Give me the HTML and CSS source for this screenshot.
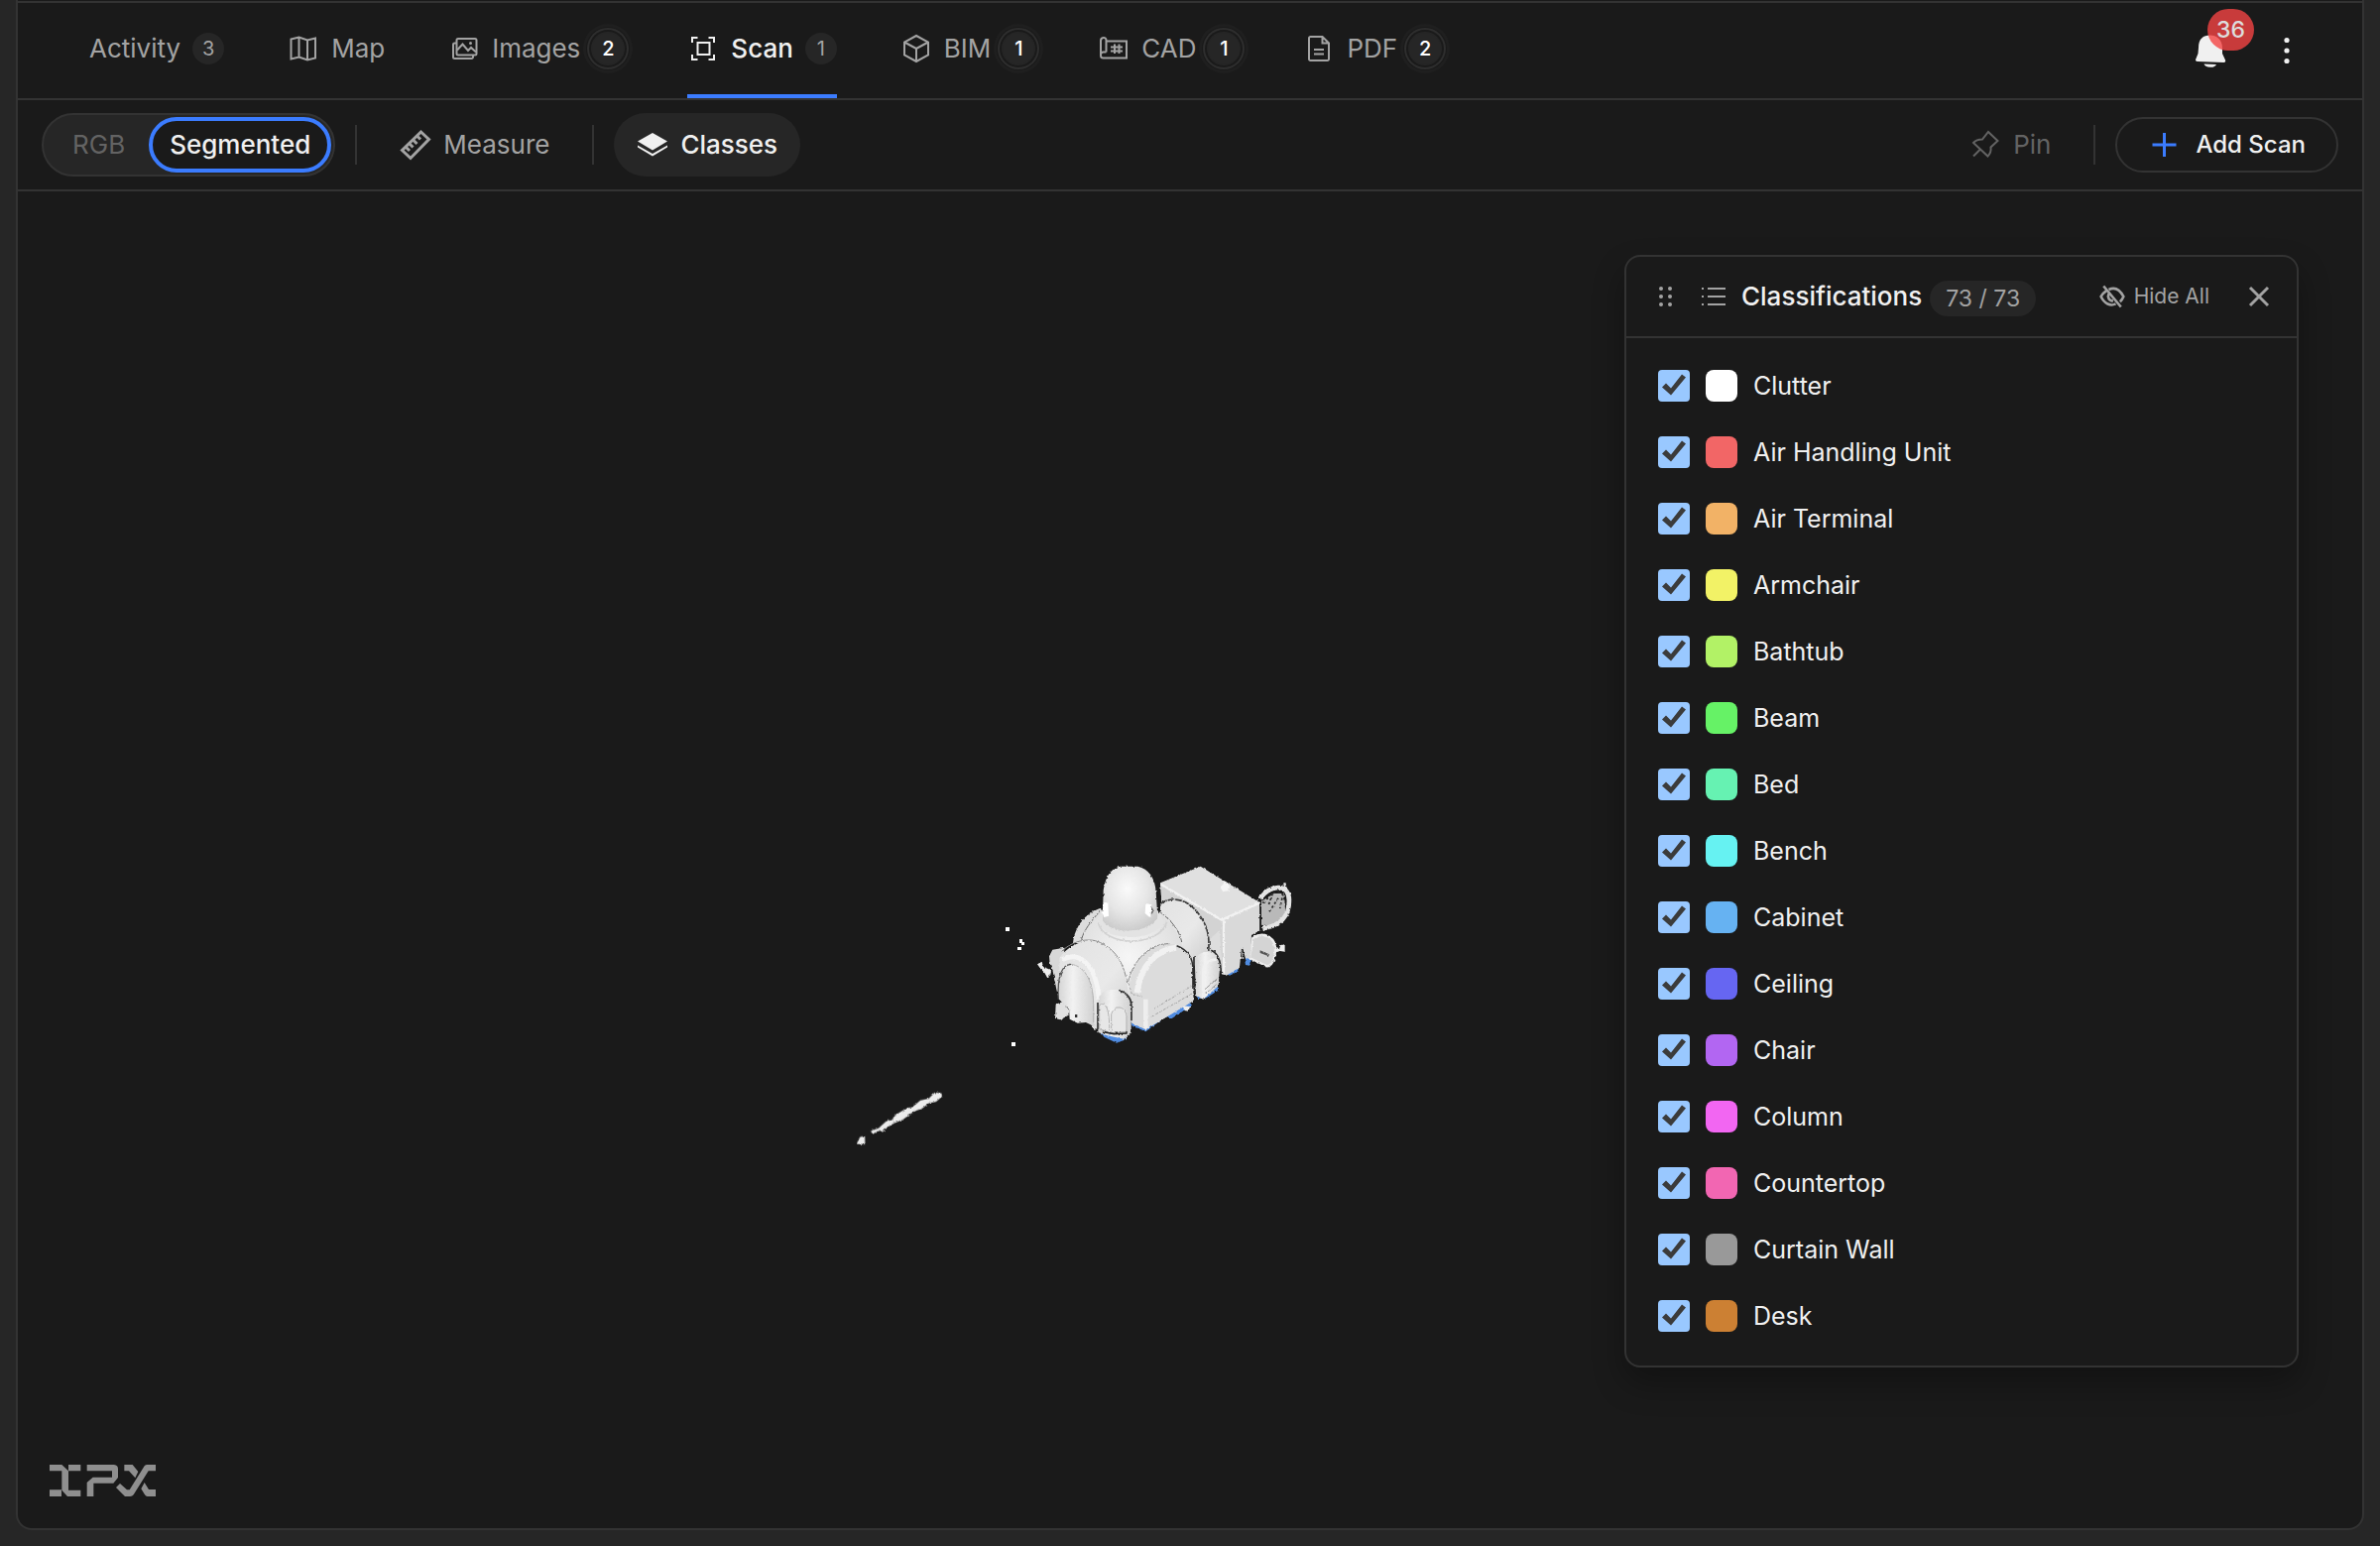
FILE: index.html
```html
<!DOCTYPE html>
<html lang="en">
<head>
<meta charset="utf-8">
<title>Scan viewer</title>
<link rel="stylesheet" href="styles.css">
</head>
<body>
<div class="frame">
  <header class="header">
    <nav class="tabs">
      <a class="tab" href="#activity">Activity <span class="count">3</span></a>
      <a class="tab" href="#map"><svg class="icon" viewBox="0 0 32 32"><path d="M3.5 6.5 11.5 4.5 20 7.500 28 5.500V25.500L20 27.500 11.500 24.500 3.500 26.500ZM11.500 4.500V24.500M20 7.500V27.500"/></svg>Map</a>
      <a class="tab" href="#images"><svg class="icon" viewBox="0 0 32 32"><rect x="8.500" y="6" width="20" height="16.500" rx="1.500"/><path d="M8 10.500H6.500a1.500 1.500 0 0 0-1.500 1.500V24.500a1.500 1.500 0 0 0 1.500 1.500H23.500a1.500 1.500 0 0 0 1.500-1.500V23M9 17.500 14.500 11.500 20 18 23 15 28 19.500"/><circle class="solid" cx="22.500" cy="10.500" r="1.500"/></svg>Images <span class="count ringed">2</span></a>
      <a class="tab active" href="#scan" aria-current="page"><svg class="icon" viewBox="0 0 32 32"><path d="M5 10V5H10.500M21.500 5H27V10M27 22V27H21.500M10.500 27H5V22"/><rect x="10.500" y="10" width="12" height="12"/></svg>Scan <span class="count">1</span></a>
      <a class="tab" href="#bim"><svg class="icon" viewBox="0 0 32 32"><path d="M16 3 28 9.500V22.500L16 29 4 22.500V9.500ZM4 9.500 16 16 28 9.500M16 16V29"/></svg>BIM <span class="count ringed">1</span></a>
      <a class="tab" href="#cad"><svg class="icon" viewBox="0 0 32 32"><path d="M8.500 19.500V7.500a2.500 2.500 0 0 0-3-2.500A3 3 0 0 0 3 8V23a2.500 2.500 0 0 0 2.500 2.500H29V8.500H8.500M8.500 19.500H5.500A2.500 2.500 0 0 0 3 22"/><path d="M17 11.500V21M21.500 11.500V21M13 14.500H25M13 18.500H25"/></svg>CAD <span class="count ringed">1</span></a>
      <a class="tab" href="#pdf"><svg class="icon" viewBox="0 0 32 32"><path d="M19.500 4H7.500A1.500 1.500 0 0 0 6 5.500V26.500A1.500 1.500 0 0 0 7.500 28H24.500A1.500 1.500 0 0 0 26 26.500V10.500ZM19.500 4V10.500H26M11 17H21M11 21.500H21"/></svg>PDF <span class="count ringed">2</span></a>
    </nav>
    <div class="actions">
      <button class="icon-button bell" type="button" aria-label="Notifications">
        <svg class="icon" viewBox="0 0 32 36"><path class="solid" d="M4 15C4 6 9 2.500 15.500 2.500S28 7 28 15V21L31 27.500C31.500 29 31 30 29.500 30L3 29C1 29 .5 27.500 1.500 26L3.500 21ZM9.500 31.500 22 32C21 34 19 35 16 34.800 12 34.500 10 33.500 9.500 31.500Z"/></svg>
        <span class="alert">36</span>
      </button>
      <button class="icon-button" type="button" aria-label="More">
        <svg class="icon" viewBox="0 0 32 32"><g class="solid"><circle cx="16" cy="5.500" r="2.600"/><circle cx="16" cy="16" r="2.600"/><circle cx="16" cy="26.500" r="2.600"/></g></svg>
      </button>
    </div>
  </header>

  <div class="toolbar">
    <div class="toggle">
      <button class="segment" type="button">RGB</button>
      <button class="segment selected" type="button">Segmented</button>
    </div>
    <span class="divider"></span>
    <button class="tool" type="button"><svg class="icon thick" viewBox="0 0 32 32"><path d="M21.500 3 29.500 10.500 11 29.500 2.500 21.500ZM17.500 7 21 10.500M13.500 11 17.500 15M10 15 13.500 18.500M6.500 18.500 10 22"/></svg>Measure</button>
    <span class="divider"></span>
    <button class="tool on" type="button"><svg class="icon" viewBox="0 0 32 32"><path class="solid" d="M16 4 31 12.500 16 21.500 1 12.500ZM1 16.500 16 25 31 16.500V18.500L16 27.500 1 18.500Z"/></svg>Classes</button>
    <span class="spacer"></span>
    <button class="tool" type="button" disabled><svg class="icon" viewBox="0 0 32 32"><path d="M19 3 28.500 12 21.500 18.500C22 22 21 25 18.500 27.500L4 14C6.500 11 9.500 10.500 13 10.500ZM11 20.500 4 27.500"/></svg>Pin</button>
    <span class="divider"></span>
    <button class="add" type="button"><svg class="icon plus" viewBox="0 0 32 32"><path d="M16.500 4V28M4.500 16H28.500"/></svg>Add Scan</button>
  </div>

  <main class="viewport">
    <svg class="cloud" viewBox="840 527 720 680" role="img" aria-label="Segmented point cloud">
      <defs>
        <radialGradient id="dome" cx=".45" cy=".35" r=".75"><stop offset="0" stop-color="#fafafa"/><stop offset=".5" stop-color="#e6e6e6"/><stop offset="1" stop-color="#c4c4c4"/></radialGradient>
        <linearGradient id="barrel" x1="0" y1="0" x2="1" y2="1"><stop offset="0" stop-color="#e2e2e2"/><stop offset=".55" stop-color="#e9e9e9"/><stop offset="1" stop-color="#cccccc"/></linearGradient>
        <linearGradient id="front" x1="0" x2="1"><stop offset="0" stop-color="#d5d5d5"/><stop offset=".4" stop-color="#f2f2f2"/><stop offset="1" stop-color="#d0d0d0"/></linearGradient>
        <radialGradient id="body" cx=".42" cy=".4" r=".6"><stop offset="0" stop-color="#f6f6f6"/><stop offset="1" stop-color="#dadada"/></radialGradient>
        <filter id="rough" x="-5%" y="-5%" width="110%" height="110%"><feTurbulence type="fractalNoise" baseFrequency=".4" numOctaves="1" seed="4" result="n"/><feDisplacementMap in="SourceGraphic" in2="n" scale="3" xChannelSelector="R" yChannelSelector="G"/></filter>
      </defs>
      <g filter="url(#rough)">
      <g transform="translate(1000 851) scale(.3333)" stroke-linejoin="round">
        <path fill="#4f8be0" d="M330 570 410 580 400 594 378 602 340 584ZM422 540 465 556 600 480 606 488 545 528 535 528 528 522 466 568 424 550ZM618 458 684 432 684 444 650 466 625 468ZM710 394 745 376 748 384 720 398ZM765 345 787 345 780 368 768 366Z"/>
        <path fill="#b9b9b9" d="M816 175 850 150 885 150 890 225 850 250 816 245Z"/>
        <path fill="none" stroke="#e4e4e4" stroke-width="14" d="M812 165C845 122 900 118 900 172 900 215 880 246 820 256"/>
        <path fill="none" stroke="#2a2a2a" stroke-width="5" stroke-dasharray="7 7" d="M824 180C845 140 880 132 886 170M840 205 870 160M882 150 872 195M850 150 838 185"/>
        <path fill="none" stroke="#e4e4e4" stroke-width="7" d="M886 118 892 150"/>
        <path fill="#d4d4d4" stroke="#ededed" stroke-width="7" d="M790 285C825 262 862 285 858 325 855 360 840 378 825 366L780 345Z"/>
        <path fill="#eee" d="M858 315 870 318 874 306 887 304 887 326 872 324 862 328Z"/>
        <path fill="#555" d="M812 322 840 334 838 340 812 330Z"/>
        <path fill="#e0e0e0" d="M510 118 632 68 812 178 700 232 658 215 514 178Z"/>
        <path fill="#d3d3d3" d="M512 122 700 232 698 395 655 330 514 180Z"/>
        <path fill="#d9d9d9" d="M700 230 812 178 812 262 786 276 784 345 758 348 756 316 750 374 710 398 696 394Z"/>
        <path fill="none" stroke="#f2f2f2" stroke-width="7" d="M512 122 696 230 812 178M702 232V392"/>
        <path fill="#f4f4f4" d="M690 128 700 124 704 112 714 118 720 130 716 142 700 145Z"/>
        <path fill="url(#barrel)" d="M512 180C550 155 600 170 632 220 652 250 660 280 656 325L612 370 500 300Z"/>
        <path fill="none" stroke="#3a3a3a" stroke-width="5" stroke-dasharray="20 3" d="M512 180C550 155 600 170 632 220 652 250 660 280 656 325"/>
        <path fill="#dddddd" d="M662 285 690 262 696 350 662 335Z"/>
        <path fill="#dcdcdc" d="M246 300C250 250 285 208 330 194L345 240 280 300Z"/>
        <path fill="url(#body)" d="M270 292C285 255 310 225 335 208L500 200C535 225 560 260 576 305L606 345 610 475 466 560 420 530 300 380Z"/>
        <path fill="none" stroke="#666" stroke-width="3" d="M272 288C280 260 300 235 326 205M508 205C545 232 568 262 576 300"/>
        <path fill="#e3e3e3" d="M325 240C340 295 500 300 522 232L500 200H335Z"/>
        <path fill="none" stroke="#d2d2d2" stroke-width="5" d="M322 238C340 312 505 315 530 236"/>
        <path fill="url(#dome)" d="M336 210 338 140C345 90 370 68 392 68H442C475 74 495 105 497 145L502 220C480 275 360 275 336 232Z"/>
        <path fill="#fff" d="M340 180 352 176 354 218 340 222 334 205ZM466 180 484 184 490 204 478 222 464 210Z"/>
        <path fill="#777" d="M484 188 492 204 482 215Z"/>
        <path fill="#d8d8d8" d="M174 340 184 320 220 314 218 360 204 470 196 440 184 380 176 362Z"/>
        <path fill="url(#barrel)" d="M205 345C235 300 300 280 335 302 380 325 405 365 412 440L425 540 310 560 205 400Z"/>
        <path fill="none" stroke="#8a8a8a" stroke-width="3" d="M212 325C245 292 300 280 335 302 380 325 400 365 410 420"/>
        <path fill="none" stroke="#f4f4f4" stroke-width="14" d="M214 350C260 325 315 355 325 470"/>
        <path fill="url(#front)" d="M204 470C198 400 215 365 240 364 285 370 312 420 310 500V552L285 540 260 542 236 530 234 500Z"/>
        <path fill="none" stroke="#555" stroke-width="4" d="M202 470C198 400 212 366 240 364"/>
        <path fill="none" stroke="#b4b4b4" stroke-width="3" d="M240 364C285 370 310 420 308 500V540"/>
        <path fill="#e0e0e0" d="M194 485 214 478 236 505 230 520 208 532 192 528Z"/>
        <path fill="#333" d="M252 516h7v8h-7z"/>
        <path fill="#dcdcdc" d="M416 425C428 350 480 300 538 302 580 306 608 330 610 365V475L466 562 420 540Z"/>
        <path fill="none" stroke="#8a8a8a" stroke-width="3" d="M412 420C428 350 480 300 538 302"/>
        <path fill="none" stroke="#333" stroke-width="5" d="M560 308C596 322 609 345 609 380V438"/>
        <path fill="none" stroke="#f1f1f1" stroke-width="18" d="M440 450C450 365 500 320 558 314"/>
        <path fill="none" stroke="#a5a5a5" stroke-width="3" stroke-dasharray="9 4" d="M414 420 425 455 455 462M490 500 605 430M485 522 608 452"/>
        <path fill="none" stroke="#eee" stroke-width="14" d="M466 470V558"/>
        <path fill="url(#front)" d="M614 345C640 315 685 325 692 352L686 430 640 470 618 460Z"/>
        <path fill="none" stroke="#2a2a2a" stroke-width="5" d="M612 340V430M664 322C684 330 693 350 694 390"/>
        <path fill="none" stroke="#999" stroke-width="3" d="M645 440 682 408M645 455 680 425"/>
        <path fill="none" stroke="#f0f0f0" stroke-width="8" d="M640 468V390C640 365 655 350 680 350"/>
        <path fill="url(#front)" d="M322 570V480C325 445 350 438 382 442 405 450 422 465 422 490V570L400 590 350 580Z"/>
        <path fill="none" stroke="#333" stroke-width="5" d="M321 560V480M385 442C405 450 423 465 423 490V535"/>
        <path fill="#e7e7e7" stroke="#b0b0b0" stroke-width="3" d="M326 560V488C345 475 358 500 356 570ZM362 572V515C372 485 405 490 408 520V568Z"/>
        <path fill="none" stroke="#222" stroke-width="5" d="M813 180V262M335 568 370 575 410 573M758 318 766 350"/>
        <path fill="#eee" d="M138 364 152 356 156 372 180 382 178 396 168 404 160 390 148 378ZM580 490 600 492 596 506 582 504Z"/>
      </g>
      <g transform="translate(840 1081) scale(.3333)" fill="#ececec">
        <path d="M114 178 138 170 160 150 180 144 186 132 222 110 240 106 264 86 290 80 308 62 328 64 330 74 312 90 290 94 270 110 244 120 212 144 186 154 156 172 150 182 140 176 120 188Z"/>
        <path d="M71 218 82 196 96 194 97 219Z"/>
      </g>
      </g>
      <path fill="#fff" d="M1014 935h4v4h-4zM1020 1051h4v4h-4zM1028 947h3v3h2v3h-3v-2h-2zM1026 955h4v3h-4z"/>
    </svg>

    <svg class="logo" viewBox="150 111 321 96" role="img" aria-label="XPX"><path d="M150 111H187L207 130V188H244V207H204L187 188V130H150ZM207 111H244V130H207ZM150 187H186V207H150ZM263 111H345Q357 112 357 124V150L343 167H283V207H263V165L281 149H339V130H263ZM376 111H401L418 132 409 151 390 130H376ZM471 111V130H449L404 202Q400 207 394 207H378L351 180 363 168 384 187H392L437 115Q440 111 446 111ZM437 165 450 186H471V207H446Q441 207 438 202L427 184Z"/></svg>

    <section class="panel" aria-label="Classifications">
      <div class="panel-head">
        <svg class="icon" viewBox="0 0 32 32"><g class="solid"><circle cx="11" cy="8" r="2"/><circle cx="20" cy="8" r="2"/><circle cx="11" cy="16" r="2"/><circle cx="20" cy="16" r="2"/><circle cx="11" cy="24" r="2"/><circle cx="20" cy="24" r="2"/></g></svg>
        <svg class="icon list" viewBox="0 0 32 32"><path d="M10 8H28M10 16H28M10 24H28M4 8H6M4 16H6M4 24H6"/></svg>
        <h2 class="title">Classifications</h2>
        <span class="total">73 / 73</span>
        <span class="spacer"></span>
        <button class="hide" type="button"><svg class="icon thick" viewBox="0 0 32 32"><path d="M6 4 26 28M12 8C19 4.500 25 8.500 29 16 28 18.500 26.500 20.500 25 22M9 9.500C6 11.500 4 14 3 16 7 24.500 14 27.500 20 24.500M12 13C10 17 12.500 21 17 21"/></svg>Hide All</button>
        <button class="icon-button close" type="button" aria-label="Close"><svg class="icon thick" viewBox="0 0 32 32"><path d="M7 7 25 25M25 7 7 25"/></svg></button>
      </div>
      <ul class="classes">
        <li><label class="row"><input class="check" type="checkbox" checked><span class="swatch" style="background:#ffffff"></span>Clutter</label></li>
        <li><label class="row"><input class="check" type="checkbox" checked><span class="swatch" style="background:#f26666"></span>Air Handling Unit</label></li>
        <li><label class="row"><input class="check" type="checkbox" checked><span class="swatch" style="background:#f2b266"></span>Air Terminal</label></li>
        <li><label class="row"><input class="check" type="checkbox" checked><span class="swatch" style="background:#f2f266"></span>Armchair</label></li>
        <li><label class="row"><input class="check" type="checkbox" checked><span class="swatch" style="background:#b2f266"></span>Bathtub</label></li>
        <li><label class="row"><input class="check" type="checkbox" checked><span class="swatch" style="background:#66f266"></span>Beam</label></li>
        <li><label class="row"><input class="check" type="checkbox" checked><span class="swatch" style="background:#66f2b2"></span>Bed</label></li>
        <li><label class="row"><input class="check" type="checkbox" checked><span class="swatch" style="background:#66f2f2"></span>Bench</label></li>
        <li><label class="row"><input class="check" type="checkbox" checked><span class="swatch" style="background:#66b2f2"></span>Cabinet</label></li>
        <li><label class="row"><input class="check" type="checkbox" checked><span class="swatch" style="background:#6666f2"></span>Ceiling</label></li>
        <li><label class="row"><input class="check" type="checkbox" checked><span class="swatch" style="background:#b266f2"></span>Chair</label></li>
        <li><label class="row"><input class="check" type="checkbox" checked><span class="swatch" style="background:#f266f2"></span>Column</label></li>
        <li><label class="row"><input class="check" type="checkbox" checked><span class="swatch" style="background:#f266b2"></span>Countertop</label></li>
        <li><label class="row"><input class="check" type="checkbox" checked><span class="swatch" style="background:#999999"></span>Curtain Wall</label></li>
        <li><label class="row"><input class="check" type="checkbox" checked><span class="swatch" style="background:#cc8033"></span>Desk</label></li>
      </ul>
    </section>
  </main>
</div>
</body>
</html>
```

FILE: styles.css
```css
:root {
  --surface: #1a1a1a;
  --raised: #262626;
  --line: #333333;
  --text: #f0f0f0;
  --muted: #a3a3a3;
  --faint: #636363;
  --accent: #3b7cff;
}

* { box-sizing: border-box; }

body {
  margin: 0;
  height: 100vh;
  padding: 0 16px 16px;
  background: var(--raised);
  color: var(--text);
  font: 400 26px/32px Inter, "Liberation Sans", sans-serif;
}

button {
  margin: 0;
  padding: 0;
  border: 0;
  background: none;
  color: inherit;
  font: inherit;
}

.frame {
  display: flex;
  flex-direction: column;
  height: 100%;
  padding-top: 1px;
  border: 2px solid var(--line);
  border-top: 0;
  border-radius: 0 0 16px 16px;
  background: var(--surface);
}

.icon {
  flex: none;
  width: 32px;
  height: 32px;
  fill: none;
  stroke: currentColor;
  stroke-width: 2;
}
.thick { stroke-width: 3; }
.solid { fill: currentColor; stroke: none; }
.spacer { flex: 1; }

.header {
  display: flex;
  justify-content: space-between;
  height: 100px;
  border-top: 2px solid var(--line);
  border-bottom: 2px solid var(--line);
  padding: 0 60px 0 72px;
}

.tabs { display: flex; gap: 64px; }

.tab {
  display: flex;
  align-items: center;
  gap: 12px;
  border-bottom: 4px solid transparent;
  color: var(--muted);
  text-decoration: none;
}
.tab.active { color: var(--text); border-color: var(--accent); font-weight: 450; }

.count {
  width: 32px;
  height: 32px;
  border-radius: 16px;
  background: var(--raised);
  color: var(--muted);
  font-size: 20px;
  font-weight: 400;
  text-align: center;
}
.ringed {
  color: #ffffff;
  font-weight: 500;
  box-shadow: 0 0 0 1px var(--raised), 0 0 0 3px var(--surface), 0 0 0 5px #2e2e2e, 0 0 0 6px var(--surface), 0 0 0 9px #1f1f1f;
}

.actions { display: flex; align-items: center; gap: 45px; }
.icon-button { display: flex; position: relative; }
.bell .icon { height: 36px; }
.alert {
  position: absolute;
  left: 13px;
  bottom: 18px;
  width: 47px;
  height: 42px;
  border-radius: 21px;
  background: rgba(244, 67, 67, .8);
  color: #dddddd;
  font-size: 23px;
  font-weight: 500;
  line-height: 42px;
}

.toolbar {
  display: flex;
  align-items: center;
  gap: 20px;
  height: 92px;
  padding: 0 24px;
  border-bottom: 2px solid var(--line);
}

.toggle {
  display: flex;
  height: 64px;
  padding: 2px;
  border: 2px solid var(--line);
  border-radius: 32px;
  background: var(--raised);
}
.segment { padding: 0 24px 0 27px; color: var(--faint); }
.segment.selected {
  padding: 0 17px;
  border: 4px solid var(--accent);
  border-radius: 28px;
  background: var(--surface);
  color: var(--text);
  font-weight: 450;
}

.divider { width: 2px; height: 40px; background: var(--line); }

.tool {
  display: flex;
  align-items: center;
  gap: 12px;
  height: 64px;
  padding: 0 23px;
  border-radius: 32px;
  color: var(--muted);
}
.tool.on { background: var(--raised); color: var(--text); font-weight: 450; }
.tool:disabled { color: var(--faint); }

.add {
  display: flex;
  align-items: center;
  gap: 16px;
  height: 56px;
  padding: 0 31px;
  border: 2px solid var(--line);
  border-radius: 28px;
  font-size: 24px;
  font-weight: 450;
}
.plus { color: var(--accent); stroke-width: 3; }

.viewport {
  position: relative;
  flex: 1;
  display: grid;
  place-items: center;
  min-height: 0;
}
.cloud { width: 720px; height: 680px; }

.logo {
  position: absolute;
  left: 32px;
  bottom: 32px;
  width: 107px;
  height: 32px;
  fill: #8f8f8f;
}

.panel {
  position: absolute;
  top: 64px;
  right: 64px;
  width: 680px;
  border: 2px solid var(--line);
  border-radius: 16px;
  background: var(--surface);
  box-shadow: 0 16px 32px rgba(0, 0, 0, .3);
}

.panel-head {
  display: flex;
  align-items: center;
  height: 82px;
  padding: 0 22px 0 24px;
  border-bottom: 2px solid var(--line);
  color: var(--muted);
}
.list { margin: 0 12px 0 16px; }
.title { margin: 0; color: var(--text); font-size: 26px; font-weight: 450; }
.total {
  margin: 4px 0 0 8px;
  padding: 2px 16px;
  border-radius: 18px;
  background: var(--raised);
  font-size: 23px;
}
.hide { display: flex; align-items: center; gap: 8px; font-size: 21px; }
.hide .icon { width: 28px; height: 28px; }
.close { margin-left: 34px; }

.classes { margin: 0; padding: 14px 32px 17px; list-style: none; }
.row { display: flex; align-items: center; gap: 16px; height: 67px; font-size: 25px; }

.check {
  appearance: none;
  width: 32px;
  height: 32px;
  margin: 0;
  border-radius: 4px;
  background: #99c8ff;
}
.check:checked::before {
  content: "";
  display: block;
  width: 32px;
  height: 32px;
  background: #3b3b3b;
  clip-path: polygon(4px 18px, 8px 14px, 13px 19px, 24px 5px, 28px 8px, 13px 26px);
}
.swatch { width: 32px; height: 32px; border-radius: 8px; }
```
